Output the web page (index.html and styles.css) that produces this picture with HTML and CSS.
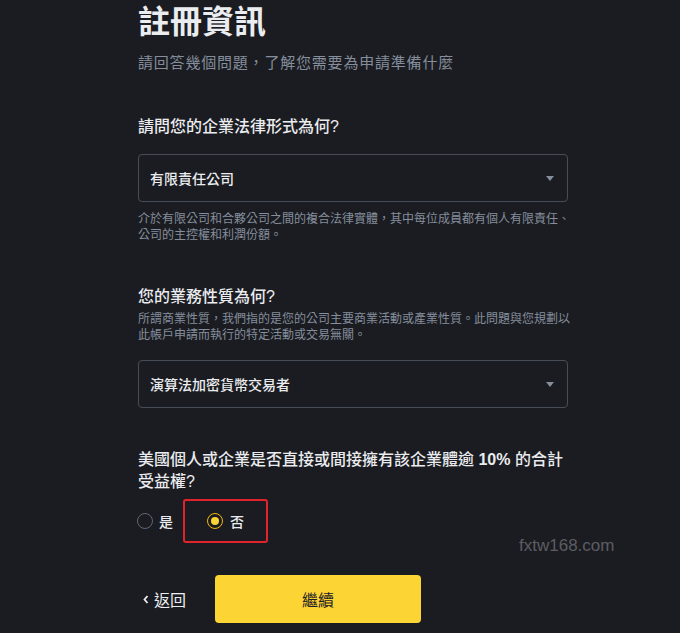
FILE: index.html
```html
<!DOCTYPE html>
<html lang="zh-Hant">
<head>
  <meta charset="UTF-8">
  <title>註冊資訊</title>
  <link rel="stylesheet" href="styles.css">
</head>
<body>
  <div class="page">
    <h1 class="title">註冊資訊</h1>
    <p class="subtitle">請回答幾個問題，了解您需要為申請準備什麼</p>

    <div class="question first">請問您的企業法律形式為何?</div>
    <div class="select">
      <span>有限責任公司</span>
      <svg class="caret" width="8" height="5" viewBox="0 0 8 5"><path d="M0 0h8L4 5z" fill="#848e9c"/></svg>
    </div>
    <p class="help after-select">介於有限公司和合夥公司之間的複合法律實體，其中每位成員都有個人有限責任、公司的主控權和利潤份額。</p>

    <div class="question">您的業務性質為何?</div>
    <p class="help tight">所謂商業性質，我們指的是您的公司主要商業活動或產業性質。此問題與您規劃以此帳戶申請而執行的特定活動或交易無關。</p>
    <div class="select">
      <span>演算法加密貨幣交易者</span>
      <svg class="caret" width="8" height="5" viewBox="0 0 8 5"><path d="M0 0h8L4 5z" fill="#848e9c"/></svg>
    </div>

    <div class="question two-line">美國個人或企業是否直接或間接擁有該企業體逾 <b>10%</b> 的合計受益權?</div>
    <div class="radios">
      <label class="option"><span class="radio"></span>是</label>
      <label class="option marked"><span class="radio checked"></span>否</label>
    </div>

    <div class="actions">
      <a class="back" href="#">
        <svg width="6" height="9" viewBox="0 0 6 9"><path d="M4.5 1 1.5 4.5 4.5 8" fill="none" stroke="#eaecef" stroke-width="1.8"/></svg>
        返回
      </a>
      <button class="next">繼續</button>
    </div>
  </div>
  <div class="watermark">fxtw168.com</div>
</body>
</html>
```

FILE: styles.css
```css
body, html {
    margin: 0;
    padding: 0;
  }
  body {
    background-color: #1b1c21;
    color: #eaecef;
    font-family: "Liberation Sans", "Noto Sans CJK TC", sans-serif;
    text-spacing-trim: space-all; /* keep full-width commas */
    height: 633px;
    overflow: hidden;
    position: relative;
  }
  .page {
    width: 430px;
    padding: 2px 0 0 138px;
    display: flex;
    flex-direction: column;
  }
  .title {
    margin: 0;
    font-size: 32px;
    line-height: 40px;
    font-weight: 700;
  }
  .subtitle {
    margin: 11px 0 0;
    font-size: 15px;
    line-height: 20px;
    letter-spacing: 0.8px;
    color: #848e9c;
  }
  .question {
    margin-top: 42px;
    font-size: 16px;
    line-height: 24px;
    font-weight: 500;
  }
  .question.two-line {
    margin-top: 41px;
    line-height: 22px;
  }
  .question b {
    font-weight: 700;
  }
  .select {
    margin-top: 15px;
    height: 46px;
    border: 1px solid #474d57;
    border-radius: 4px;
    display: flex;
    align-items: center;
    justify-content: space-between;
    padding: 0 13px 0 11px;
    font-size: 14px;
    font-weight: 500;
  }
  .help.tight + .select {
    margin-top: 17px;
  }
  .help {
    margin: 0 -10px 0 0;
    font-size: 12px;
    line-height: 16px;
    color: #848e9c;
  }
  .help.after-select {
    margin-top: 9px;
  }
  .help.tight {
    margin-top: 2px;
  }
  .radios {
    margin-top: 6px;
    display: flex;
    align-items: center;
    gap: 10px;
  }
  .option {
    display: flex;
    align-items: center;
    gap: 6px;
    font-size: 14px;
    font-weight: 500;
  }
  .option:first-child {
    margin-left: -1px;
  }
  .option.marked {
    height: 40px;
    padding: 0 22px;
    border: 2px solid #e3232b;
    border-radius: 3px;
    gap: 7px;
  }
  .radio {
    width: 14px;
    height: 14px;
    border: 1.5px solid #5e6673;
    border-radius: 50%;
    display: flex;
    align-items: center;
    justify-content: center;
  }
  .radio.checked {
    border-color: #f0b90b;
  }
  .radio.checked::after {
    content: "";
    width: 8px;
    height: 8px;
    border-radius: 50%;
    background: #fcd535;
  }
  .actions {
    margin-top: 32px;
    display: flex;
    align-items: center;
  }
  .back {
    width: 77px;
    display: flex;
    align-items: center;
    gap: 5px;
    padding-left: 5px;
    box-sizing: border-box;
    color: #eaecef;
    text-decoration: none;
    font-size: 16px;
  }
  .next {
    width: 206px;
    height: 48px;
    border: none;
    border-radius: 4px;
    background: #fcd535;
    color: #1e2026;
    font-family: inherit;
    font-size: 16px;
  }
  .watermark {
    position: absolute;
    left: 519px;
    top: 536px;
    font-family: "Liberation Sans", sans-serif;
    font-size: 17px;
    color: #5b5d63;
  }
```
